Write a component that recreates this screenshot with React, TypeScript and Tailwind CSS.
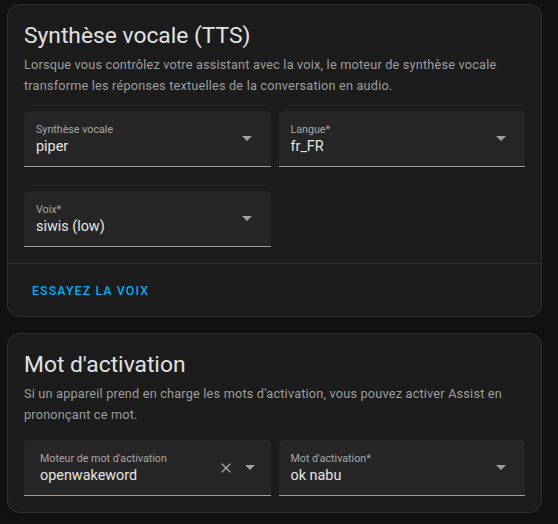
import { X } from "lucide-react";

function Arrow() {
  return (
    <svg width="10" height="5" viewBox="0 0 10 5" className="shrink-0">
      <path d="M0 0 L10 0 L5 5 Z" fill="#a0a0a0" />
    </svg>
  );
}

function SelectField({
  label,
  value,
  clearable,
}: {
  label: string;
  value: string;
  clearable?: boolean;
}) {
  return (
    <div
      className={`flex h-14 items-center rounded-t bg-[#262626] border-b border-[#9e9e9e] ${
        clearable ? "pl-4 pr-4" : "pl-3 pr-[19px]"
      }`}
    >
      <div className="flex min-w-0 flex-1 flex-col pt-[2px]">
        <span className="text-[10.7px] leading-[14px] text-[#a8a8a8]">{label}</span>
        <span className="text-[14.4px] leading-[20px] text-[#e4e4e4]">{value}</span>
      </div>
      {clearable && <X className="mr-[11px] h-[16px] w-[16px] text-[#a0a0a0]" strokeWidth={2} />}
      <Arrow />
    </div>
  );
}

function Card({
  title,
  description,
  children,
  actions,
}: {
  title: string;
  description: React.ReactNode;
  children: React.ReactNode;
  actions?: React.ReactNode;
}) {
  return (
    <div className="w-[535px] rounded-xl border border-[#2f2f2f] bg-[#1c1c1c]">
      <div className="px-4 pt-[15px]">
        <h2 className="text-[22.8px] leading-8 text-[#e1e1e1]">{title}</h2>
      </div>
      <div className="px-4 pb-4">
        <p className="mt-[2px] text-[12.7px] leading-[21px] tracking-[0.2px] text-[#9e9e9e]">
          {description}
        </p>
        <div className="mt-[15px]">{children}</div>
      </div>
      {actions && <div className="border-t border-[#2f2f2f] px-2 pt-[9px] pb-[7px]">{actions}</div>}
    </div>
  );
}

export default function App() {
  return (
    <main
      className="min-h-screen bg-[#111111] pl-[7px] pt-[4px]"
      style={{ fontFamily: "Roboto, 'Noto Sans', sans-serif" }}
    >
      <Card
        title="Synthèse vocale (TTS)"
        description={
          <>
            Lorsque vous contrôlez votre assistant avec la voix, le moteur de synthèse vocale
            transforme les réponses textuelles de la conversation en audio.
          </>
        }
        actions={
          <button className="flex h-9 items-center px-4 text-[12.4px] font-medium uppercase tracking-[1.1px] text-[#03a9f4]">
            Essayez la voix
          </button>
        }
      >
        <div className="grid grid-cols-2 gap-x-2 gap-y-6">
          <SelectField label="Synthèse vocale" value="piper" />
          <SelectField label="Langue*" value="fr_FR" />
          <SelectField label="Voix*" value="siwis (low)" />
        </div>
      </Card>

      <div className="h-4" />

      <Card
        title="Mot d'activation"
        description={
          <>
            Si un appareil prend en charge les mots d'activation, vous pouvez activer Assist en
            prononçant ce mot.
          </>
        }
      >
        <div className="grid grid-cols-2 gap-x-2">
          <SelectField label="Moteur de mot d'activation" value="openwakeword" clearable />
          <SelectField label="Mot d'activation*" value="ok nabu" />
        </div>
      </Card>
    </main>
  );
}
